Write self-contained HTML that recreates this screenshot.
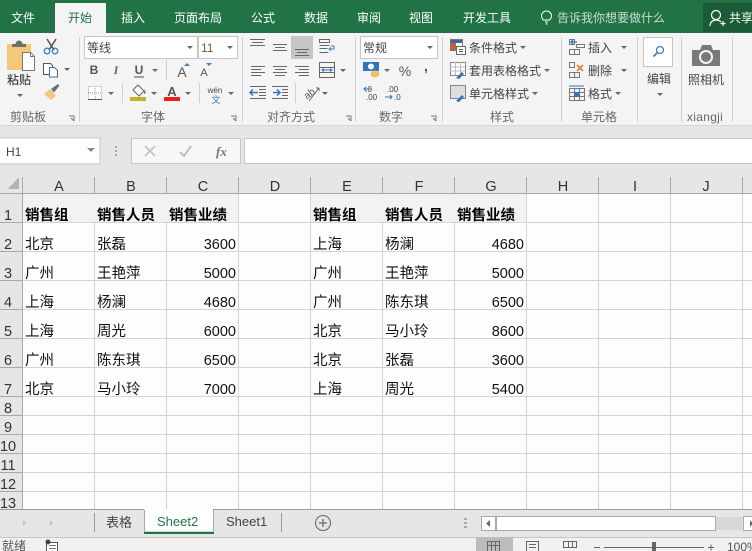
<!DOCTYPE html>
<html lang="zh"><head><meta charset="utf-8"><title>Excel</title>
<style>
html,body{margin:0;padding:0;width:752px;height:551px;overflow:hidden;background:#fff}
svg{display:block}
text{font-family:"Liberation Sans","Noto Sans CJK SC",sans-serif;fill:#333}
.t{font-size:12px;fill:#fff}
.r{font-size:12px;fill:#444}
.l{font-size:12px;fill:#666}
.c{font-size:14.5px;fill:#111}
.b{font-size:14.5px;fill:#000;font-weight:bold}
.h{font-size:14.5px;fill:#333}
.n{font-size:14.5px;fill:#111;text-anchor:end}
.m{text-anchor:middle}
</style></head><body>
<svg width="752" height="551" viewBox="0 0 752 551" xmlns="http://www.w3.org/2000/svg">
<defs>
<path id="ar" d="M-3 0h6l-3 3z" fill="#666"/>
<path id="gl" d="M0 0h5v5M2 2l3 3" fill="none" stroke="#777" stroke-width="1"/>
</defs>
<!-- title/tab bar -->
<rect width="752" height="33" fill="#217346"/>
<rect x="703" y="3" width="49" height="29" fill="#1a5c38"/>
<rect x="55" y="3" width="51" height="30" fill="#f4f4f4"/>
<text class="t" x="11" y="22">文件</text>
<text class="t" x="68" y="22" style="fill:#217346">开始</text>
<text class="t" x="121" y="22">插入</text>
<text class="t" x="174" y="22">页面布局</text>
<text class="t" x="251" y="22">公式</text>
<text class="t" x="304" y="22">数据</text>
<text class="t" x="357" y="22">审阅</text>
<text class="t" x="409" y="22">视图</text>
<text class="t" x="463" y="22">开发工具</text>
<text class="t" x="557" y="22" style="fill:#c9ddd1">告诉我你想要做什么</text>
<path d="M545 22h3M545.500 24h2M543.500 20c-1-1-2-2-2-4a5 5 0 0 1 10 0c0 2-1 3-2 4z" fill="none" stroke="#fff" stroke-width="1"/>
<text class="t" x="729" y="22">共享</text>
<circle cx="716" cy="15" r="4.500" fill="none" stroke="#fff" stroke-width="1.200"/>
<path d="M710 26c0-4 3-6 6-6s4 1 5 2M723 21v5M720.500 23.500h5" fill="none" stroke="#fff" stroke-width="1.200"/>

<!-- ribbon -->
<rect y="33" width="752" height="92" fill="#f4f4f4"/>
<rect y="125" width="752" height="1" fill="#d6d6d6"/>
<g stroke="#d0d0d0" stroke-width="1">
<path d="M79.500 37V122M242.500 37V122M355.500 37V122M442.500 37V122M561.500 37V122M637.500 37V122M681.500 37V122M732.500 37V122"/>
<path d="M166.500 60V80M122.500 83V103M199.500 83V103M295.500 83V103"/>
</g>
<!-- clipboard -->
<rect x="7" y="44" width="24" height="26" fill="#f2c879"/>
<path d="M12 47v-3h3.500a3.500 3.500 0 0 1 7 0H26v3z" fill="#6e6e6e"/>
<path d="M22.500 52.500h8l4 4v14h-12z" fill="#fff" stroke="#777"/>
<path d="M30.500 52.500v4h4" fill="none" stroke="#777"/>
<text class="r" x="7" y="84" style="font-size:12px;fill:#222">粘贴</text>
<use href="#ar" x="20" y="94"/>
<!-- scissors -->
<path d="M47 39l7 11M56 39l-7 11" stroke="#555" stroke-width="1.600" fill="none"/>
<circle cx="47" cy="51" r="2.800" fill="none" stroke="#3f7fc4" stroke-width="1.300"/>
<circle cx="55" cy="51" r="2.800" fill="none" stroke="#3f7fc4" stroke-width="1.300"/>
<!-- copy -->
<path d="M43.500 63.500h7l2 2v9h-9z" fill="#fff" stroke="#555"/>
<path d="M49.500 67.500h5l3 3v6.500h-8z" fill="#fff" stroke="#3c6fa8"/>
<use href="#ar" x="67" y="68"/>
<!-- brush -->
<path d="M44 94l6-5 6 7-5 4z" fill="#f3c77c"/>
<path d="M51 89l7-5 1.500 1.500-5.500 7z" fill="#6e6e6e"/>
<text class="l" x="10" y="121">剪贴板</text>
<use href="#gl" x="69" y="116"/>

<!-- font group -->
<rect x="84.500" y="36.500" width="113" height="22" fill="#fff" stroke="#c6c6c6"/>
<rect x="198.500" y="36.500" width="39" height="22" fill="#fff" stroke="#c6c6c6"/>
<text class="r" x="87" y="52">等线</text>
<text class="r" x="201" y="52" style="fill:#7a5a2a">11</text>
<use href="#ar" x="190" y="46"/><use href="#ar" x="230" y="46"/>
<text x="94" y="74" class="m" style="font-size:12px;font-weight:bold;fill:#555">B</text>
<text x="116" y="74" class="m" style="font-size:12px;font-style:italic;font-family:'Liberation Serif';font-weight:bold;fill:#666">I</text>
<text x="139" y="74" class="m" style="font-size:12px;font-weight:bold;fill:#555">U</text>
<path d="M134 77h10" stroke="#555"/>
<use href="#ar" x="155" y="69"/>
<text x="182" y="77" class="m" style="font-size:14px;fill:#555">A</text>
<path d="M184 66h6l-3-3z" fill="#3f7fc4"/>
<text x="204" y="76" class="m" style="font-size:11px;fill:#555">A</text>
<path d="M206 63h6l-3 3z" fill="#3f7fc4"/>
<!-- borders -->
<path d="M88.500 86.500h13v13h-13z" fill="#fff" stroke="#aaa" stroke-dasharray="1 1"/>
<path d="M95 86v13M88 93h13" stroke="#999" stroke-dasharray="1 1"/>
<path d="M88 99.500h14" stroke="#555"/>
<use href="#ar" x="111" y="92"/>
<!-- fill -->
<path d="M133 90l5-5 6 6-5 5z" fill="#fff" stroke="#666"/>
<path d="M144 89l2 4-2 1z" fill="#3f7fc4"/>
<rect x="130" y="97" width="16" height="4" fill="#c6ad2b"/>
<use href="#ar" x="154" y="92"/>
<text x="172" y="96" class="m" style="font-size:13px;font-weight:bold;fill:#555">A</text>
<rect x="164" y="97" width="16" height="4" fill="#ee1c1c"/>
<use href="#ar" x="188" y="92"/>
<text x="215" y="93" class="m" style="font-size:8px;fill:#444">wén</text>
<text x="216" y="103" class="m" style="font-size:9px;fill:#2f75c0">文</text>
<use href="#ar" x="231" y="92"/>
<text class="l" x="141" y="121">字体</text>
<use href="#gl" x="231" y="116"/>

<!-- alignment -->
<rect x="291" y="36" width="22" height="23" fill="#c6c6c6"/>
<g stroke="#666" stroke-width="1" fill="none">
<path d="M250 39.500h15M252 42.500h11M250 45.500h15"/>
<path d="M273 44.500h14M275 47.500h10M273 50.500h14"/>
<path d="M295 49.500h14M297 52.500h10M295 55.500h14"/>
<path d="M251 66.500h14M251 69.500h10M251 72.500h14M251 75.500h10"/>
<path d="M273 66.500h14M275 69.500h10M273 72.500h14M275 75.500h10"/>
<path d="M295 66.500h14M299 69.500h10M295 72.500h14M299 75.500h10"/>
<path d="M319.500 62.500h15v15h-15zM319 67.500h16M319 72.500h16"/>
<path d="M259 89.500h7M259 92.500h7M259 95.500h7M250 98.500h16M250 86.500h16" stroke="#666"/>
<path d="M282 89.500h6M282 92.500h6M282 95.500h6M272 98.500h16M272 86.500h16" stroke="#666"/>
<path d="M319.500 39.500h10v3h-10zM319.500 45.500h10M319.500 48.500h8M319.500 52.500h9" />
</g>
<path d="M331 46h3v3h-4M331 47.500l-2 1.500 2 1.500" fill="none" stroke="#3f7fc4"/>
<path d="M322 70h10M324 68.500l-2 1.500 2 1.500M330 68.500l2 1.500-2 1.500" fill="none" stroke="#2f75c0"/>
<use href="#ar" x="343" y="69"/>
<path d="M258 92.500h-8M253 89.500l-3 3 3 3M273 92.500h7M277 89.500l3 3-3 3" fill="none" stroke="#2f75c0" stroke-width="1.500"/>
<text x="309" y="97" class="m" transform="rotate(-35 309 93)" style="font-size:10px;fill:#555">ab</text>
<path d="M309 101l10-13M319 88h-3M319 88v3" fill="none" stroke="#666"/>
<use href="#ar" x="325" y="92"/>
<text class="l" x="267" y="121">对齐方式</text>
<use href="#gl" x="346" y="116"/>

<!-- number -->
<rect x="360.500" y="36.500" width="77" height="22" fill="#fff" stroke="#c6c6c6"/>
<text class="r" x="363" y="52">常规</text>
<use href="#ar" x="430" y="46"/>
<rect x="363" y="62" width="16" height="9" fill="#2f75c0"/>
<circle cx="371" cy="66.500" r="3" fill="#fff"/>
<ellipse cx="375" cy="74" rx="4.500" ry="3.500" fill="#eec26a"/>
<use href="#ar" x="387" y="69"/>
<text x="405" y="76" class="m" style="font-size:14px;fill:#555">%</text>
<text x="426" y="71" class="m" style="font-size:14px;font-weight:bold;fill:#555">,</text>
<text x="363" y="92" style="font-size:8px;fill:#444">&#160;.0</text>
<text x="366" y="100" style="font-size:8px;fill:#444">.00</text>
<path d="M364 89h7M366 87l-2 2 2 2" fill="none" stroke="#2f75c0"/>
<text x="387" y="92" style="font-size:8px;fill:#444">.00</text>
<text x="394" y="100" style="font-size:8px;fill:#444">.0</text>
<path d="M385 97h7M390 95l2 2-2 2" fill="none" stroke="#2f75c0"/>
<text class="l" x="379" y="121">数字</text>
<use href="#gl" x="431" y="116"/>

<!-- styles -->
<rect x="450.500" y="39.500" width="12" height="11" fill="#fff" stroke="#777"/>
<rect x="451" y="40" width="11" height="3" fill="#3b6aa0"/>
<rect x="451" y="43" width="5" height="7" fill="#c4622d"/>
<rect x="456.500" y="46.500" width="9" height="8" fill="#fff" stroke="#666"/>
<path d="M459 49.500h4M459 51.500h4" stroke="#555"/>
<text class="r" x="469" y="52">条件格式</text><use href="#ar" x="523" y="46"/>
<rect x="450.500" y="62.500" width="15" height="13" fill="#fff" stroke="#888"/>
<path d="M455.500 62v13M460.500 62v13M450 67h15M450 71h15" stroke="#bbb"/>
<path d="M456 78l6-6 2 2-5 5z" fill="#2f75c0"/>
<text class="r" x="469" y="75">套用表格格式</text><use href="#ar" x="547" y="69"/>
<rect x="450.500" y="85.500" width="15" height="13" fill="#ddd" stroke="#888"/>
<path d="M456 101l6-6 2 2-5 5z" fill="#2f75c0"/>
<text class="r" x="469" y="98">单元格样式</text><use href="#ar" x="535" y="92"/>
<text class="l" x="490" y="121">样式</text>

<!-- cells -->
<g fill="none" stroke="#777">
<path d="M569.500 39.500h5v5h-5zM569.500 49.500h5v5h-5zM574.500 49.500h5v5h-5zM576.500 44.500h8v3h-8z"/>
<path d="M569.500 62.500h5v5h-5zM569.500 72.500h5v5h-5zM574.500 72.500h5v5h-5z"/>
<path d="M569.500 88.500h15v12h-15zM574.500 88v12M579.500 88v12M569 92.500h15M569 96.500h15"/>
</g>
<path d="M577 42h-6M573 40l-2 2 2 2" fill="none" stroke="#2f75c0" stroke-width="1.300"/>
<path d="M577 65l6 6M583 65l-6 6" stroke="#ee7a2c" stroke-width="1.600"/>
<path d="M569 86h15" stroke="#2f75c0"/>
<rect x="574" y="92" width="5" height="5" fill="#2f75c0"/>
<text class="r" x="588" y="52">插入</text><use href="#ar" x="624" y="46"/>
<text class="r" x="588" y="75">删除</text><use href="#ar" x="624" y="69"/>
<text class="r" x="588" y="98">格式</text><use href="#ar" x="618" y="92"/>
<text class="l" x="581" y="121">单元格</text>

<!-- edit -->
<rect x="643.500" y="37.500" width="29" height="29" fill="#fff" stroke="#c6c6c6"/>
<circle cx="660" cy="50" r="3.500" fill="none" stroke="#3f7fc4" stroke-width="1.300"/>
<path d="M657.500 52.500l-4 4" stroke="#3f7fc4" stroke-width="1.800"/>
<text class="r" x="647" y="83">编辑</text>
<use href="#ar" x="660" y="93"/>
<!-- camera -->
<path d="M692 50h8l2-5h9l2 5h7v16h-28z" fill="#7a7a7a"/>
<circle cx="706" cy="57" r="6" fill="#7a7a7a" stroke="#f4f4f4" stroke-width="2"/>
<text class="r" x="688" y="84">照相机</text>
<text class="l" x="687" y="121" style="font-size:12px;letter-spacing:.3px">xiangji</text>

<!-- formula bar -->
<rect y="126" width="752" height="46" fill="#e6e6e6"/>
<rect x="-1" y="138" width="101" height="26" fill="#fff" stroke="#c6c6c6"/>
<text x="6" y="156" style="font-size:12px;fill:#444">H1</text>
<path d="M87 148h8l-4 4z" fill="#888"/>
<g fill="#aaa"><rect x="115" y="146" width="2" height="2"/><rect x="115" y="150" width="2" height="2"/><rect x="115" y="154" width="2" height="2"/></g>
<rect x="131.500" y="138.500" width="109" height="25" fill="#f7f7f7" stroke="#c6c6c6"/>
<rect x="244.500" y="138.500" width="509" height="25" fill="#fff" stroke="#c6c6c6"/>
<path d="M145 146l10 10M155 146l-10 10" stroke="#bdbdbd" stroke-width="1.500"/>
<path d="M180 152l4 4 7-10" fill="none" stroke="#bdbdbd" stroke-width="2"/>
<text x="216" y="156" style="font-size:13px;font-style:italic;font-weight:bold;font-family:'Liberation Serif';fill:#777">fx</text>

<!-- headers -->
<rect y="172" width="752" height="21" fill="#e6e6e6"/>
<rect y="193" width="23" height="317" fill="#e6e6e6"/>
<path d="M8 189h11V177z" fill="#b4b4b4"/>
<!-- sheet -->
<rect x="23" y="194" width="729" height="316" fill="#fdfdfd"/>
<rect x="23" y="194" width="216" height="28" fill="#f2f2f2"/>
<rect x="311" y="194" width="216" height="28" fill="#f2f2f2"/>
<g stroke="#d4d4d4" stroke-width="1">
<path d="M23 222.500h729M23 251.500h729M23 280.500h729M23 309.500h729M23 338.500h729M23 367.500h729M23 396.500h729M23 415.500h729M23 434.500h729M23 453.500h729M23 472.500h729M23 491.500h729"/>
<path d="M94.500 222V510M166.500 222V510M238.500 193V510M310.500 193V510M382.500 222V510M454.500 222V510M526.500 193V510M598.500 193V510M670.500 193V510M742.500 193V510"/>
</g>
<g stroke="#a8a8a8" stroke-width="1">
<path d="M0 193.500h752M22.500 177V510M94.500 177V193M166.500 177V193M238.500 177V193M310.500 177V193M382.500 177V193M454.500 177V193M526.500 177V193M598.500 177V193M670.500 177V193M742.500 177V193"/>
<path d="M0 222.500h23M0 251.500h23M0 280.500h23M0 309.500h23M0 338.500h23M0 367.500h23M0 396.500h23M0 415.500h23M0 434.500h23M0 453.500h23M0 472.500h23M0 491.500h23"/>
</g>
<g class="hd">
<text class="h m" x="59" y="191">A</text><text class="h m" x="131" y="191">B</text><text class="h m" x="203" y="191">C</text><text class="h m" x="275" y="191">D</text><text class="h m" x="347" y="191">E</text><text class="h m" x="419" y="191">F</text><text class="h m" x="491" y="191">G</text><text class="h m" x="563" y="191">H</text><text class="h m" x="635" y="191">I</text><text class="h m" x="706" y="191">J</text>
<text class="h m" x="8" y="220">1</text><text class="h m" x="8" y="249">2</text><text class="h m" x="8" y="278">3</text><text class="h m" x="8" y="307">4</text><text class="h m" x="8" y="336">5</text><text class="h m" x="8" y="365">6</text><text class="h m" x="8" y="394">7</text><text class="h m" x="8" y="413">8</text><text class="h m" x="8" y="432">9</text><text class="h m" x="8" y="451">10</text><text class="h m" x="8" y="470">11</text><text class="h m" x="8" y="489">12</text><text class="h m" x="8" y="508">13</text>
</g>
<text class="b" x="25" y="220">销售组</text><text class="b" x="97" y="220">销售人员</text><text class="b" x="169" y="220">销售业绩</text>
<text class="b" x="313" y="220">销售组</text><text class="b" x="385" y="220">销售人员</text><text class="b" x="457" y="220">销售业绩</text>

<text class="c" x="25" y="249">北京</text><text class="c" x="97" y="249">张磊</text><text class="n" x="236" y="249">3600</text>
<text class="c" x="25" y="278">广州</text><text class="c" x="97" y="278">王艳萍</text><text class="n" x="236" y="278">5000</text>
<text class="c" x="25" y="307">上海</text><text class="c" x="97" y="307">杨澜</text><text class="n" x="236" y="307">4680</text>
<text class="c" x="25" y="336">上海</text><text class="c" x="97" y="336">周光</text><text class="n" x="236" y="336">6000</text>
<text class="c" x="25" y="365">广州</text><text class="c" x="97" y="365">陈东琪</text><text class="n" x="236" y="365">6500</text>
<text class="c" x="25" y="394">北京</text><text class="c" x="97" y="394">马小玲</text><text class="n" x="236" y="394">7000</text>

<text class="c" x="313" y="249">上海</text><text class="c" x="385" y="249">杨澜</text><text class="n" x="524" y="249">4680</text>
<text class="c" x="313" y="278">广州</text><text class="c" x="385" y="278">王艳萍</text><text class="n" x="524" y="278">5000</text>
<text class="c" x="313" y="307">广州</text><text class="c" x="385" y="307">陈东琪</text><text class="n" x="524" y="307">6500</text>
<text class="c" x="313" y="336">北京</text><text class="c" x="385" y="336">马小玲</text><text class="n" x="524" y="336">8600</text>
<text class="c" x="313" y="365">北京</text><text class="c" x="385" y="365">张磊</text><text class="n" x="524" y="365">3600</text>
<text class="c" x="313" y="394">上海</text><text class="c" x="385" y="394">周光</text><text class="n" x="524" y="394">5400</text>

<!-- sheet tabs -->
<rect y="510" width="752" height="27" fill="#e6e6e6"/>
<path d="M0 509.500h144M213 509.500h539" stroke="#9a9a9a"/>
<path d="M26 523l-3-3v6zM50 520l3 3-3 3z" fill="#c4c4c4"/>
<path d="M94.500 513V532M281.500 513V532" stroke="#9a9a9a"/>
<path d="M144.500 510V532h69V510" fill="#fff" stroke="#a8a8a8"/>
<rect x="145" y="509" width="68" height="3" fill="#fff"/>
<rect x="144" y="532" width="70" height="2" fill="#217346"/>
<text x="106" y="527" style="font-size:13px;fill:#444">表格</text>
<text x="157" y="526" style="font-size:13px;fill:#217346">Sheet2</text>
<text x="226" y="526" style="font-size:13px;fill:#444">Sheet1</text>
<circle cx="323" cy="523" r="7.500" fill="none" stroke="#777" stroke-width="1.200"/>
<path d="M323 519v8M319 523h8" stroke="#777" stroke-width="1.500"/>
<g fill="#aaa"><rect x="464" y="518" width="3" height="2"/><rect x="464" y="522" width="3" height="2"/><rect x="464" y="526" width="3" height="2"/></g>
<rect x="481.500" y="516.500" width="14" height="14" fill="#fff" stroke="#a8a8a8"/>
<path d="M486 523.500l4-3.500v7z" fill="#666"/>
<rect x="496.500" y="516.500" width="219" height="14" fill="#fff" stroke="#a8a8a8"/>
<rect x="716" y="517" width="26" height="13" fill="#d8d8d8"/>
<rect x="743.500" y="516.500" width="14" height="14" fill="#fff" stroke="#a8a8a8"/>
<path d="M750 520v7l3-3.500z" fill="#666"/>
<rect y="537" width="752" height="14" fill="#f1f1f1"/>
<path d="M0 537.500h752" stroke="#c6c6c6"/>
<!-- status -->
<text x="2" y="550" style="font-size:12px;fill:#555">就绪</text>
<rect x="46.500" y="542.500" width="11" height="10" fill="#fff" stroke="#555"/>
<path d="M49 545.500h7M49 548.500h7" stroke="#777"/>
<circle cx="48" cy="542" r="2.500" fill="#444"/>
<rect x="476" y="537" width="37" height="14" fill="#bcbcbc"/>
<path d="M487.500 541.500h12v10h-12zM491.500 541v10M495.500 541v10M487 545.500h13" fill="none" stroke="#666"/>
<path d="M526.500 541.500h12v10h-12zM529 544.500h7M529 547.500h7" fill="none" stroke="#666"/>
<path d="M563.500 541.500h13v6h-13zM568.500 541v6M572.500 541v6" fill="none" stroke="#666"/>
<path d="M594 547.500h6M604 547.500h100M708 547.500h6M711 544.500v6" stroke="#666"/>
<rect x="652" y="542" width="4" height="9" fill="#666"/>
<text x="727" y="551" style="font-size:12px;fill:#555">100%</text>
</svg>
</body></html>
